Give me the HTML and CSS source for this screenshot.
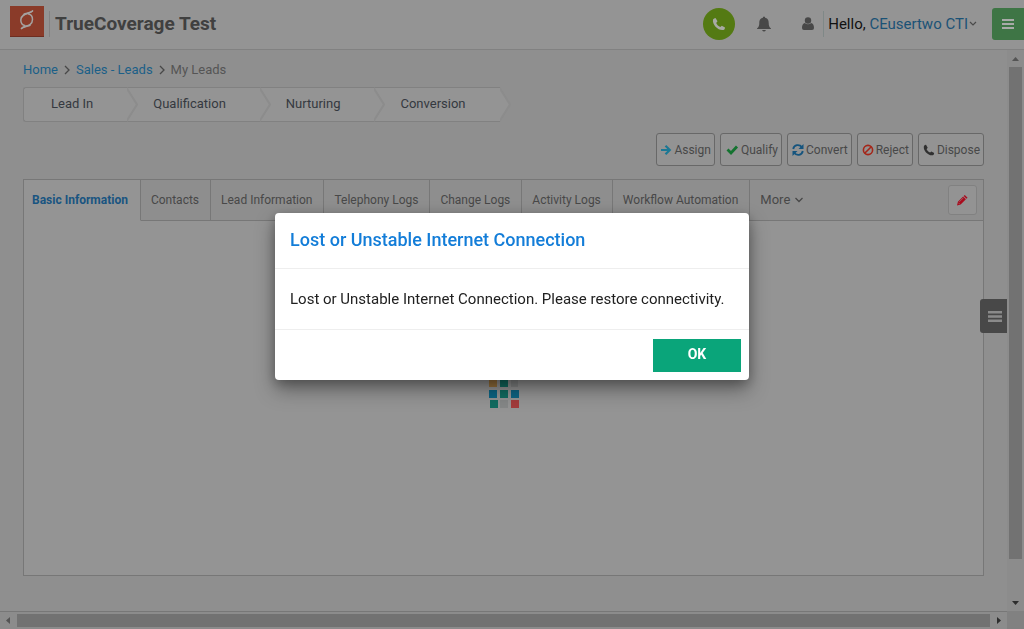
FILE: index.html
```html
<!DOCTYPE html>
<html lang="en">
<head>
<meta charset="utf-8">
<title>TrueCoverage Test</title>
<link rel="stylesheet" href="styles.css">
</head>
<body>
<div class="app">
  <header class="topbar">
    <a class="logo" href="#" aria-label="Home page"><svg width="34" height="30" viewBox="0 0 34 30" fill="none" stroke="#a5a2a0" stroke-width="1.500" stroke-linecap="round" stroke-linejoin="round"><path d="M22.500 5C21 8 11 6.500 10.800 14c0 3 1.500 5 4 5.500"/><path d="M11.500 22.500C13 19.500 22.500 21 22.500 13.500c0-3-1.500-5-4-5.500"/><path d="M14 8.200c2-1.200 6-1 8.500-3.200M20 19.300c-2 1.200-6 1-8.500 3.200"/></svg></a>
    <h1 class="brand">TrueCoverage Test</h1>
    <button class="call" aria-label="Call"><svg width="16" height="16" viewBox="0 0 16 16"><path d="M2 3.500Q3 2 4.500 2L6.500 5.300 5.200 7C6 8.800 7.500 10.300 9.300 11L10.800 9.700 14 11.500Q14 13.500 12.500 14C7.500 15 1 9 2 3.500Z" fill="currentColor"/></svg></button>
    <button class="icon-button bell" aria-label="Notifications"><svg width="14" height="16" viewBox="0 0 14 16"><path d="M6 1q1-1 2 0v.700c3 .600 3.700 3 3.700 5.300 0 2.600.6 4.300 2.300 5.600V13H0v-.4C1.700 11.300 2.300 9.600 2.300 7 2.300 4.700 3 2.300 6 1.700ZM5 14h4q-2 3-4 0Z" fill="currentColor"/></svg></button>
    <div class="account">
      <svg class="user" width="12" height="14" viewBox="0 0 12 14"><circle cx="6" cy="3.500" r="3.200" fill="currentColor"/><path d="M2.700 6q3.300 2.600 6.600 0C11.500 6.500 12 9 12 11q0 2-2 2H2q-2 0-2-2c0-2 .5-4.500 2.700-5Z" fill="currentColor"/></svg>
      <span class="greeting">Hello, <a href="#">CEusertwo CTI</a></span>
      <svg width="8" height="6" viewBox="0 0 8 6" fill="none" stroke="#4a4a4a" stroke-width="1.200"><path d="m1 1 3 3 3-3"/></svg>
    </div>
    <button class="menu" aria-label="Menu"><svg width="12" height="10" viewBox="0 0 12 10"><path d="M0 0h12v2H0zM0 4h12v2H0zM0 8h12v2H0z" fill="currentColor"/></svg></button>
  </header>
  <main class="page">
    <nav class="crumbs" aria-label="Breadcrumb">
      <a href="#">Home</a>
      <svg width="6" height="10" viewBox="0 0 6 10" fill="none" stroke="#484848" stroke-width="1.300"><path d="m1 1 4 4-4 4"/></svg>
      <a href="#">Sales - Leads</a>
      <svg width="6" height="10" viewBox="0 0 6 10" fill="none" stroke="#484848" stroke-width="1.300"><path d="m1 1 4 4-4 4"/></svg>
      <span>My Leads</span>
    </nav>
    <ol class="steps">
      <li>Lead In<svg class="arrow" viewBox="0 0 12 35"><path d="M-1 0 10 17.500-1 35"/></svg></li>
      <li>Qualification<svg class="arrow" viewBox="0 0 12 35"><path d="M-1 0 10 17.500-1 35"/></svg></li>
      <li>Nurturing<svg class="arrow" viewBox="0 0 12 35"><path d="M-1 0 10 17.500-1 35"/></svg></li>
      <li>Conversion<svg class="arrow" viewBox="0 0 12 35"><path d="M-1 0 10 17.500-1 35"/></svg></li>
    </ol>
    <div class="actions">
      <button><svg width="11" height="12" viewBox="0 0 11 12" fill="none" stroke="#1c7894" stroke-width="2.200"><path d="M0 6h9M4.500 1.700 8.800 6l-4.300 4.300"/></svg>Assign</button>
      <button><svg width="14" height="12" viewBox="0 0 14 12" fill="none" stroke="#147330" stroke-width="2.800"><path d="M2.500 5.500 6 9l6-6.500"/></svg>Qualify</button>
      <button><svg width="12" height="12" viewBox="0 0 12 12" fill="none" stroke="#15547e" stroke-width="1.800"><path d="M1.200 5C2 .500 7.500 0 10 3.200M10.800 7C10 11.500 4.500 12 2 8.800"/><path d="M11.500 0v5h-5ZM.500 12V7h5Z" fill="#15547e" stroke="none"/></svg>Convert</button>
      <button><svg width="12" height="12" viewBox="0 0 12 12" fill="none" stroke="#a52619" stroke-width="1.600"><circle cx="6" cy="6" r="4.600"/><path d="m2.700 9.300 6.600-6.600"/></svg>Reject</button>
      <button><svg width="12" height="12" viewBox="1 1 14 14"><path d="M2 3.500Q3 2 4.500 2L6.500 5.300 5.200 7C6 8.800 7.500 10.300 9.300 11L10.800 9.700 14 11.500Q14 13.500 12.500 14C7.500 15 1 9 2 3.500Z" fill="#303030"/></svg>Dispose</button>
    </div>
    <section class="panel">
      <div class="tabs">
        <button class="tab active">Basic Information</button>
        <button class="tab">Contacts</button>
        <button class="tab">Lead Information</button>
        <button class="tab">Telephony Logs</button>
        <button class="tab">Change Logs</button>
        <button class="tab">Activity Logs</button>
        <button class="tab">Workflow Automation</button>
        <button class="tab more">More <svg width="8" height="6" viewBox="0 0 8 6" fill="none" stroke="currentColor" stroke-width="1.300"><path d="m.5 1 3.500 3.500L7.500 1"/></svg></button>
        <button class="edit" aria-label="Edit"><svg width="11" height="12" viewBox="0 0 12 12" fill="#a90b1d"><path d="m8.500.500 3 3-1.200 1.200-3-3ZM6.700 2.300l3 3-5.700 5.700L0 12l1-4Z"/><path d="m2.500 8 4.500-4.500M1.500 9l1.500 1.500" stroke="#939393" stroke-width=".6"/></svg></button>
      </div>
      <div class="loading"><svg width="30" height="30" viewBox="0 0 30 30"><path fill="#97713b" d="M0 0h8v8H0z"/><path fill="#116b60" d="M11 0h8v8h-8zM11 11h8v8h-8zM1 21h8v8H1z"/><path fill="#858787" d="M22 0h7v8h-7zM11 21h8v8h-8z"/><path fill="#0c6483" d="M0 11h8v8H0zM22 11h8v8h-8z"/><path fill="#a23c3c" d="M22 21h8v8h-8z"/></svg></div>
    </section>
    <button class="drawer" aria-label="Open side panel"><svg width="14" height="12" viewBox="0 0 14 12"><path d="M0 1h14v2.600H0zM0 5.200h14v2.600H0zM0 9.400h14V12H0z" fill="#8a8a8a"/></svg></button>
  </main>
  <div class="vbar"><svg width="7" height="4"><path d="M0 4 3.500 0 7 4z" fill="#545454"/></svg><span class="vthumb"></span><svg width="7" height="4"><path d="M0 0h7L3.500 4z" fill="#2d2d2d"/></svg></div>
  <div class="hbar"><svg width="4" height="7"><path d="M4 0v7L0 3.500z" fill="#545454"/></svg><span class="hthumb"></span><svg width="4" height="7"><path d="M0 0v7l4-3.500z" fill="#2d2d2d"/></svg></div>
  <div class="corner"></div>
</div>
<div class="backdrop">
  <div class="dialog" role="alertdialog" aria-modal="true" aria-labelledby="dialog-title">
    <h2 class="dialog-title" id="dialog-title">Lost or Unstable Internet Connection</h2>
    <p class="dialog-body">Lost or Unstable Internet Connection. Please restore connectivity.</p>
    <div class="dialog-footer"><button class="ok">OK</button></div>
  </div>
</div>
</body>
</html>
```
FILE: styles.css
```css
* { box-sizing: border-box; }
body { margin: 0; font-family: Roboto, "Liberation Sans", sans-serif; font-size: 13px; color: #484848; background: #8f8f8f; }
button { font: inherit; color: inherit; margin: 0; padding: 0; border: 0; background: none; }
a { color: #1b5f88; text-decoration: none; }
svg { display: block; flex: none; }

.app { height: 100vh; display: grid; grid-template: 50px minmax(0, 1fr) 18px / minmax(0, 1fr) 17px; }

.topbar { grid-column: 1 / -1; display: flex; align-items: center; background: #949494; border-bottom: 1px solid #818181; padding: 0 0 2px 10px; }
.logo { background: #8a3b29; border-bottom: 1px solid #6e2d20; margin-bottom: 4px; }
.brand { margin: 0 auto 0 5px; padding-left: 5px; border-left: 1px solid #828282; font-size: 19px; line-height: 26px; font-weight: 700; color: #404040; }
.call { width: 32px; height: 32px; border-radius: 50%; background: #547a13; color: #a8aaa4; display: grid; place-items: center; }
.bell { margin-left: 22px; color: #484848; }
.account { display: flex; align-items: center; margin: 0 15px 0 31px; }
.user { color: #484848; margin-right: 9px; }
.greeting { border-left: 1px solid #7f8887; padding-left: 4px; margin-right: 1px; font-size: 15px; line-height: 26px; color: #111; }
.greeting a { color: #1b5276; }
.menu { width: 32px; height: 32px; border-radius: 3px 0 0 3px; background: #3e7545; color: #a8aaa8; display: grid; place-items: center; }

.page { position: relative; display: flex; flex-direction: column; padding: 12px 23px 35px; overflow: hidden; }
.crumbs { display: flex; align-items: center; gap: 6px; line-height: 16px; color: #555; }
.steps { display: flex; align-self: flex-start; margin: 9px 0 0; padding: 0; list-style: none; }
.steps li { position: relative; height: 35px; line-height: 32px; padding: 0 34px 0 26px; color: #353940; background: #949494; border: solid #818181; border-width: 1px 0; }
.steps li:first-child { padding-left: 27px; border-left-width: 1px; border-radius: 3px 0 0 3px; }
.arrow { position: absolute; z-index: 1; top: -1px; left: 100%; width: 12px; height: 35px; }
.arrow path { fill: #949494; stroke: #8c8c8c; stroke-width: 2; }

.actions { display: flex; justify-content: flex-end; gap: 5px; margin-top: 11px; }
.actions button { display: flex; align-items: center; gap: 2px; height: 33px; padding: 0 3px 0 4px; border: 1px solid #686868; border-radius: 3px; font-size: 12px; background: #939393; }

.panel { flex: 1; min-height: 0; margin-top: 13px; display: flex; flex-direction: column; border: 1px solid #777; background: #949494; }
.tabs { display: flex; height: 41px; background: #8e8e8e; }
.tab { padding: 0 11px 1px 10px; border: solid #777; border-width: 0 1px 1px 0; font-size: 12px; white-space: nowrap; }
.active { padding: 0 12px 1px 8px; font-weight: 700; color: #195481; background: #949494; border-bottom-color: #949494; }
.more { flex: 1; display: flex; align-items: center; gap: 5px; border-right: 0; font-size: 13px; }
.edit { display: grid; place-items: center; width: 36px; padding-right: 5px; border-bottom: 1px solid #777; }
.edit svg { box-sizing: content-box; padding: 8px; border: 1px solid #818181; border-radius: 3px; background: #939393; }
.loading { flex: 1; display: flex; justify-content: center; padding-top: 158px; }
.drawer { position: absolute; right: 0; top: 249px; width: 27px; height: 34px; border-radius: 3px 0 0 3px; background: #484848; display: grid; place-items: center; padding-left: 3px; }

.vbar { display: flex; flex-direction: column; align-items: center; gap: 6px; padding: 7px 0 6px; background: #8c8c8c; }
.vthumb { width: 13px; height: 492px; margin-bottom: auto; background: #727272; }
.hbar { display: flex; align-items: center; gap: 7px; padding: 0 6px; background: #8c8c8c; border-top: 1px solid #777; }
.hthumb { flex: 1; height: 13px; background: #727272; }
.corner { background: #818181; }

.backdrop { position: fixed; inset: 0; display: flex; justify-content: center; align-items: flex-start; padding-top: 213px; }
.dialog { width: 474px; background: #fff; border-radius: 4px; box-shadow: 0 10px 20px rgba(0, 0, 0, .35), 0 3px 12px rgba(0, 0, 0, .25); }
.dialog-title { margin: 0; padding: 15px 15px 16px; font-size: 18px; line-height: 24px; font-weight: 500; color: #137dd8; border-bottom: 1px solid #eee; }
.dialog-body { margin: 0; padding: 20px 15px; font-size: 15px; line-height: 20px; color: #212121; border-bottom: 1px solid #eee; }
.dialog-footer { display: flex; justify-content: flex-end; padding: 9px 8px 8px; }
.ok { width: 88px; height: 33px; padding-bottom: 3px; background: #0aa57a; color: #fff; font-size: 14px; font-weight: 700; }
```
